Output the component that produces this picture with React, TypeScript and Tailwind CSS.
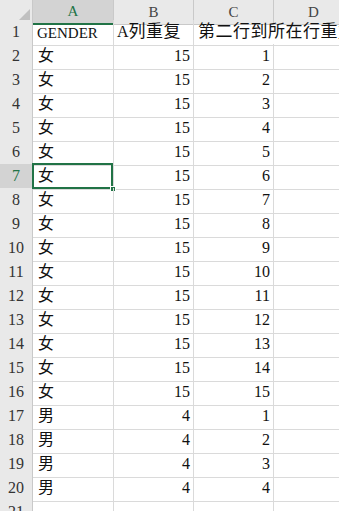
const rows = [
  { a: "女", b: "15", c: "1" },
  { a: "女", b: "15", c: "2" },
  { a: "女", b: "15", c: "3" },
  { a: "女", b: "15", c: "4" },
  { a: "女", b: "15", c: "5" },
  { a: "女", b: "15", c: "6" },
  { a: "女", b: "15", c: "7" },
  { a: "女", b: "15", c: "8" },
  { a: "女", b: "15", c: "9" },
  { a: "女", b: "15", c: "10" },
  { a: "女", b: "15", c: "11" },
  { a: "女", b: "15", c: "12" },
  { a: "女", b: "15", c: "13" },
  { a: "女", b: "15", c: "14" },
  { a: "女", b: "15", c: "15" },
  { a: "男", b: "4", c: "1" },
  { a: "男", b: "4", c: "2" },
  { a: "男", b: "4", c: "3" },
  { a: "男", b: "4", c: "4" },
]

const gridCols = "grid grid-cols-[33px_81px_80px_80px_80px]"
const cell = "border-r border-b border-[#dadada] flex items-end pb-[1px] whitespace-nowrap"

export default function App() {

  const RowNum = ({ n, active }: { n: number; active?: boolean }) => {
    return (
      <div
        className={
          "border-r border-b border-[#c9c9c9] flex items-end justify-center pb-[1px] text-[16px] " +
          (active ? "bg-[#d3d3d3] text-[#217346]" : "bg-[#e9e9e9] text-[#333]")
        }
      >
        {n}
      </div>
    )
  }

  const ColHead = ({ label, active }: { label: string; active?: boolean }) => {
    return (
      <div
        className={
          "border-r border-[#c9c9c9] flex items-center justify-center text-[15px] " +
          (active
            ? "bg-[#d3d3d3] text-[#217346] border-b-2 border-b-[#217346]"
            : "bg-[#e9e9e9] text-[#444] border-b border-b-[#c9c9c9]")
        }
      >
        {label}
      </div>
    )
  }

  return (
    <div
      className="w-[339px] h-[511px] overflow-hidden bg-white text-[#111]"
      style={{ fontFamily: '"Liberation Serif", "Noto Sans CJK SC", serif' }}
    >
      {/* header */}
      <div className={gridCols + " h-[20px]"}>
        <div className="bg-[#e9e9e9] border-r border-b border-[#c9c9c9] flex items-end justify-end p-[2px]">
          <svg width="13" height="13" viewBox="0 0 13 13">
            <polygon points="13,0 13,13 0,13" fill="#c0c0c0" />
          </svg>
        </div>
        <ColHead label="A" active />
        <ColHead label="B" />
        <ColHead label="C" />
        <ColHead label="D" />
      </div>

      {/* row 1 */}
      <div className={gridCols + " h-[24px]"}>
        <RowNum n={1} />
        <div className={cell + " pl-[4px] text-[15px]"}>GENDER</div>
        <div className={cell + " pl-[3px] text-[16px] overflow-hidden"}>
          A<span className="text-[17px] tracking-[0.5px]">列重复</span>
        </div>
        <div className="col-span-2 border-r border-b border-[#dadada] flex items-end pb-[1px] pl-[4px] text-[17px] tracking-[0.5px] whitespace-nowrap overflow-hidden">
          第二行到所在行重复
        </div>
      </div>

      {rows.map((r, i) => {
        const n = i + 2
        const sel = n === 7
        return (
          <div key={n} className={gridCols + " h-[24px]"}>
            <RowNum n={n} active={sel} />
            <div className={cell + " pl-[5px] text-[16px] relative"}>
              {r.a}
              {sel && (
                <>
                  <div className="absolute -left-[1px] -top-[1px] right-0 bottom-0 border-2 border-[#217346]" />
                  <div className="absolute -right-[3px] -bottom-[3px] w-[6px] h-[6px] bg-[#217346] border border-white" />
                </>
              )}
            </div>
            <div className={cell + " justify-end pr-[3px] text-[16px]"}>{r.b}</div>
            <div className={cell + " justify-end pr-[3px] text-[16px]"}>{r.c}</div>
            <div className={cell}></div>
          </div>
        )
      })}

      {/* row 21 */}
      <div className={gridCols + " h-[24px]"}>
        <RowNum n={21} />
        <div className={cell}></div>
        <div className={cell}></div>
        <div className={cell}></div>
        <div className={cell}></div>
      </div>
    </div>
  )
}
